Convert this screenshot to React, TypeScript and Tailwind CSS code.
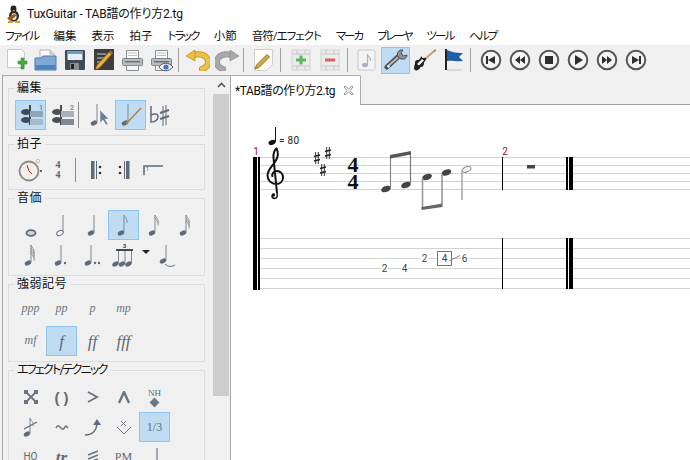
import type { ReactNode } from "react";

const SANS = "font-['Roboto','Noto_Sans_CJK_JP',sans-serif] [font-feature-settings:'palt']";
const GREY = "#5f6b78";

const MENUS = [
  { label: "ファイル", cls: "tracking-[-1.6px]" },
  { label: "編集", cls: "" },
  { label: "表示", cls: "" },
  { label: "拍子", cls: "" },
  { label: "トラック", cls: "tracking-[-1.7px]" },
  { label: "小節", cls: "" },
  { label: "音符/エフェクト", cls: "tracking-[-1px]" },
  { label: "マーカ", cls: "tracking-[-2px]" },
  { label: "プレーヤ", cls: "tracking-[-2.2px]" },
  { label: "ツール", cls: "tracking-[-1.7px]" },
  { label: "ヘルプ", cls: "tracking-[-1.7px]" },
];

function Svg({ w = 24, h = 24, children }: { w?: number; h?: number; children: ReactNode }) {
  return (
    <svg width={w} height={h} viewBox={`0 0 ${w} ${h}`} className="block">
      {children}
    </svg>
  );
}

// small quarter-ish note used by most palette icons
function Note({ x, y, stem = 22, fill = GREY, open = false }: { x: number; y: number; stem?: number; fill?: string; open?: boolean }) {
  return (
    <g>
      <ellipse cx={x} cy={y} rx={3.4} ry={2.3} transform={`rotate(-25 ${x} ${y})`} fill={open ? "none" : fill} stroke={fill} strokeWidth={open ? 1 : 0} />
      <line x1={x + 3} y1={y - 1} x2={x + 3} y2={y - stem} stroke="#7c8794" strokeWidth={1} />
    </g>
  );
}

function Flags({ x, y, n }: { x: number; y: number; n: number }) {
  return (
    <g fill="none" stroke="#7c8794" strokeWidth={0.9}>
      {Array.from({ length: n }, (_, i) => (
        <path key={i} d={`M${x} ${y + i * 2.6}c1 3 4 4 3 8`} />
      ))}
    </g>
  );
}

function Btn({ on, w = "w-[31px]", children }: { on?: boolean; w?: string; children: ReactNode }) {
  return (
    <div className={`${w} h-[30px] shrink-0 flex items-center justify-center ${on ? "bg-[#bfdcf3] border border-[#8ec4f4]" : ""}`}>
      {children}
    </div>
  );
}

function TBtn({ on, ml, children }: { on?: boolean; ml?: string; children: ReactNode }) {
  return (
    <div className={`w-[29px] h-[27px] shrink-0 flex items-center justify-center ${ml ?? ""} ${on ? "bg-[#bfdcf3] border border-[#8ec4f4]" : ""}`}>
      {children}
    </div>
  );
}

function TSep({ ml }: { ml: string }) {
  return <div className={`w-px h-[24px] bg-[#a0a0a0] shrink-0 ${ml}`} />;
}

function Play({ children }: { children: ReactNode }) {
  return (
    <svg width={22} height={22} viewBox="0 0 22 22" className="block">
      <circle cx={11} cy={11} r={9.3} fill="#f4f4f4" stroke="#555" strokeWidth={2} />
      <g fill="#2e2e2e">{children}</g>
    </svg>
  );
}

function Group({ title, h, pt, track = "tracking-[0.5px]", children }: { title: string; h: string; pt: string; track?: string; children: ReactNode }) {
  return (
    <fieldset className={`border border-[#dcdcdc] mx-[8px] pl-[6px] min-w-0 ${h} ${pt}`}>
      <legend className={`-ml-[1px] px-[3px] text-[12px] leading-[16px] text-[#111] ${track}`}>{title}</legend>
      {children}
    </fieldset>
  );
}

function Dyn({ children }: { children: string }) {
  return <span className="font-['Liberation_Serif',serif] italic text-[#6b7682] text-[12px] leading-none -mt-[2px]">{children}</span>;
}

function BigDyn({ children }: { children: string }) {
  return <span className="font-['Liberation_Serif',serif] italic text-[#5f6b78] text-[17px] leading-none">{children}</span>;
}

function TuxIcon() {
  return (
    <Svg w={15} h={18}>
      <ellipse cx={7.5} cy={4} rx={3} ry={3.4} fill="#222" />
      <ellipse cx={8} cy={11} rx={5} ry={5.5} fill="#2b2b2b" />
      <ellipse cx={8} cy={11.5} rx={2.6} ry={3.6} fill="#ece6d2" />
      <path d="M6 5h3l-1 1.5zM2 16h5v2H2zM9 16h5v2H9z" fill="#e0a020" />
      <path d="M1 13 8 9l3 1-7 6z" fill="#9a5a20" />
    </Svg>
  );
}

function NewIcon() {
  return (
    <Svg w={22} h={24}>
      <path d="M1.500 1.500h14l3 3v15h-17z" fill="#fdfdfd" stroke="#c8c8c8" />
      <path d="M13 12h3v-3h3v3h3v3h-3v5h-3v-5h-3z" transform="translate(-1 1)" fill="#46ad3c" stroke="#2b8228" strokeWidth={0.5} />
    </Svg>
  );
}

function OpenIcon() {
  return (
    <Svg w={24} h={24}>
      <path d="M6 2h10l4 4v8H6z" fill="#fafafa" stroke="#b0b0b0" />
      <path d="M16 2v4h4" fill="#dcdcdc" stroke="#b0b0b0" />
      <path d="M1 10h6l2-2h13v14H1z" fill="#7fa9d4" stroke="#4a7cb0" />
      <rect x={1.500} y={17} width={20} height={4.500} fill="#4c84bd" />
    </Svg>
  );
}

function SaveIcon() {
  return (
    <Svg w={22} h={22}>
      <rect x={1} y={1} width={20} height={20} rx={1} fill="#3f4a55" />
      <rect x={3.500} y={2} width={15} height={9} fill="#e8eef3" />
      <rect x={3.500} y={2} width={15} height={3} fill="#5f9fd0" />
      <rect x={6} y={14} width={9} height={7} fill="#8a8f95" />
      <rect x={7} y={15} width={3} height={5} fill="#222" />
    </Svg>
  );
}

function EditDocIcon() {
  return (
    <Svg w={22} h={24}>
      <rect x={1} y={1} width={20} height={21} fill="#3d3d3d" />
      <path d="M4 6h9M4 10h7M4 14h5" stroke="#c4d0db" />
      <path d="M2 22 4 17 16 4l2.500 2.500L6.500 20z" fill="#e8b02c" stroke="#6e4c10" strokeWidth={0.6} />
      <path d="M16 4l2.500 2.500L20 5l-2.500-2.500z" fill="#d05a4a" />
    </Svg>
  );
}

function Printer({ eye }: { eye?: boolean }) {
  return (
    <Svg w={23} h={23}>
      <path d="M5.500 1.500h12v8h-12z" fill="#fbfbfb" stroke="#8a8f95" />
      <path d="M7 4h9M7 6.500h9" stroke="#c0c0c0" />
      <rect x={1.500} y={9.500} width={20} height={7} rx={1} fill="#b7bcc1" stroke="#7d838a" />
      <rect x={4} y={12} width={15} height={1.400} fill="#6a6f75" />
      <path d="M5.500 16.500h12v5h-12z" fill="#f5f5f5" stroke="#8a8f95" />
      {eye && (
        <g>
          <path d="M9 18c3-5 10-5 14 0-4 5-11 5-14 0z" fill="#eef2f6" stroke="#555" />
          <circle cx={16} cy={18} r={2.600} fill="#3a78b8" />
        </g>
      )}
    </Svg>
  );
}

function UndoIcon({ redo }: { redo?: boolean }) {
  const c = redo ? "#a9a9a9" : "#edc040";
  const s = redo ? "#8c8c8c" : "#b78a1b";
  return (
    <svg width={25} height={21} viewBox="0 0 25 21" className="block" style={redo ? { transform: "scaleX(-1)" } : undefined}>
      <path d="M8 5c7-2 15 0 15 7 0 3-2 6-6 7" fill="none" stroke={s} strokeWidth={6} strokeLinecap="round" />
      <path d="M8 5c7-2 15 0 15 7 0 3-2 6-6 7" fill="none" stroke={c} strokeWidth={4.500} strokeLinecap="round" />
      <path d="M1 6 10 0v11z" fill={c} stroke={s} strokeWidth={0.7} />
    </svg>
  );
}

function PencilPage() {
  return (
    <Svg w={21} h={24}>
      <path d="M1.500 1.500h18v15l-6 6h-12z" fill="#fcfcfc" stroke="#cfcfcf" />
      <path d="M2 21 3.500 17 14 6.500 16.500 9 6 19.500z" fill="#d9a92c" stroke="#6a5320" strokeWidth={0.7} />
    </Svg>
  );
}

function TrackIcon({ add }: { add?: boolean }) {
  const c = add ? "#5fb65a" : "#d5625c";
  return (
    <Svg w={20} h={22}>
      <rect x={1} y={1} width={18} height={20} fill="#ececec" stroke="#d2d2d2" />
      <path d="M1 5h18M1 17h18M6 1v4M14 1v4M6 17v4M14 17v4" stroke="#c4c4c4" />
      <rect x={5} y={9.500} width={10} height={3} fill={c} />
      {add && <rect x={8.500} y={6.500} width={3} height={9} fill={c} />}
    </Svg>
  );
}

function NotePage() {
  return (
    <Svg w={19} h={22}>
      <rect x={1} y={1} width={17} height={20} rx={1} fill="#f4f4f4" stroke="#c8c8c8" />
      <ellipse cx={8} cy={16} rx={3} ry={2.200} fill="#a9b3c4" />
      <path d="M10.500 16V5c0 3 3.500 3 3 7" fill="none" stroke="#a9b3c4" strokeWidth={1.200} />
    </Svg>
  );
}

function Wrench() {
  return (
    <Svg w={24} h={24}>
      <path d="M3 19 16 7" stroke="#4a4a4a" strokeWidth={5} strokeLinecap="round" />
      <path d="M3.500 18.500 16 7.500" stroke="#b8bec4" strokeWidth={2} />
      <path d="M14 9c-2-4 1-8 5-7l-2 3 2 3 4-1c0 4-5 6-9 2z" fill="#8d949b" stroke="#3f3f3f" strokeWidth={0.8} />
      <circle cx={4.500} cy={18.500} r={1.200} fill="#fff" />
    </Svg>
  );
}

function Guitar() {
  return (
    <Svg w={24} h={24}>
      <path d="M10 13 21 3" stroke="#c2a06e" strokeWidth={1.800} />
      <path d="M20 3.500l2-2.500 1.500 1.500-2.500 2z" fill="#b58a55" />
      <path d="M8 8c1 1 1 2 2 2s3-1 3 1-2 2-2 4c0 2-1 4-3 4-1 0-1 2-3 3s-4 0-4-2 1-3 1-5c0-3 2-3 3-3s3-2 3-4z" fill="#1e1e1e" />
      <path d="M4 16l5-5 2 1.500-5 5z" fill="#eeeeee" />
    </Svg>
  );
}

function Flag() {
  return (
    <Svg w={22} h={24}>
      <rect x={2} y={1} width={2} height={21} fill="#222" />
      <path d="M4 2c5 2 8 3 16 3l-4 4 4 4c-7 1-11-1-16 0z" fill="#1f5fa8" />
      <path d="M4 21h16l-3 2H4z" fill="#d8d8d8" />
    </Svg>
  );
}

function Clef() {
  return (
    <g fill="none" stroke="#111">
      <path d="M277 193c.8 3.500 0 5.500-2.500 5.500-3 0-3.500-4-.5-4.300" strokeWidth={1.500} />
      <circle cx={273.500} cy={195} r={1.700} fill="#111" stroke="none" />
      <path d="M277 193 273.500 158c-.5-5 1.500-9 3-9.500 2 3.500 1.500 9-1.500 13.500-3.500 5-7.500 8-7.500 13.500 0 5 4 8.500 8.500 8.500s7-3 7-6.500-2.500-6.500-6-6.500-5.500 3-4.500 6" strokeWidth={2} />
    </g>
  );
}

function Sharp({ x, y }: { x: number; y: number }) {
  return (
    <g stroke="#222">
      <path d={`M${x - 1.300} ${y - 6}v12M${x + 1.300} ${y - 6}v12`} strokeWidth={0.9} />
      <path d={`M${x - 3} ${y - 1.500}l6-1.500M${x - 3} ${y + 3}l6-1.500`} strokeWidth={1.700} />
    </g>
  );
}

function Head({ x, y, fill = "#444" }: { x: number; y: number; fill?: string }) {
  return <ellipse cx={x} cy={y} rx={5} ry={3} transform={`rotate(-20 ${x} ${y})`} fill={fill} />;
}

function TabNum({ x, y, n }: { x: number; y: number; n: number }) {
  return (
    <g>
      <rect x={x - 3.500} y={y - 5} width={7} height={10} fill="#fff" />
      <text x={x} y={y + 3.500} textAnchor="middle" fontSize={10} fill="#444" fontFamily="Roboto, sans-serif">
        {n}
      </text>
    </g>
  );
}

function Score() {
  const staff = [157, 165, 173, 181, 189];
  const tab = [238, 248, 258, 268, 278, 288];
  return (
    <svg viewBox="231 105 459 355" width={459} height={355} className="block">
      {[...staff, ...tab].map((y) => (
        <line key={y} x1={256} y1={y + 0.500} x2={690} y2={y + 0.500} stroke="#d2d2d2" />
      ))}
      <rect x={253} y={157} width={4} height={133} fill="#000" />
      <rect x={258} y={157} width={2} height={133} fill="#000" />
      <text x={256} y={155} textAnchor="middle" fontSize={10} fill="#a01010" fontFamily="Roboto, sans-serif">1</text>
      <text x={505} y={155} textAnchor="middle" fontSize={10} fill="#a01010" fontFamily="Roboto, sans-serif">2</text>

      <ellipse cx={272} cy={142.500} rx={3.600} ry={2.400} transform="rotate(-20 272 142.500)" fill="#111" />
      <line x1={275.500} y1={127} x2={275.500} y2={142} stroke="#111" />
      <text x={279} y={143.500} fontSize={10} letterSpacing={0.3} fill="#222" fontFamily="Roboto, sans-serif">= 80</text>

      <Clef />
      <Sharp x={328} y={153} />
      <Sharp x={317} y={158} />
      <Sharp x={323} y={170} />
      <text x={353} y={172} textAnchor="middle" fontSize={22} fontWeight={700} fill="#111" fontFamily="Liberation Serif, serif">4</text>
      <text x={353} y={189} textAnchor="middle" fontSize={22} fontWeight={700} fill="#111" fontFamily="Liberation Serif, serif">4</text>

      <Head x={386} y={189} />
      <Head x={406} y={185} />
      <line x1={390.500} y1={187} x2={390.500} y2={157} stroke="#888" strokeWidth={1.200} />
      <line x1={410.500} y1={183} x2={410.500} y2={153} stroke="#777" strokeWidth={1.200} />
      <path d="M390 155 411 151v3.500L390 158.500z" fill="#555" />

      <Head x={427} y={177} />
      <Head x={446.500} y={172.500} />
      <line x1={422.500} y1={178} x2={422.500} y2={209} stroke="#999" strokeWidth={1.600} />
      <line x1={442} y1={174} x2={442} y2={204} stroke="#999" strokeWidth={1.600} />
      <path d="M421.500 207 442.500 203.500v3.500L421.500 210z" fill="#666" />

      <ellipse cx={466.700} cy={169.300} rx={4.400} ry={2.500} transform="rotate(-25 466.700 169.300)" fill="#fff" stroke="#888" />
      <line x1={462} y1={170} x2={462} y2={200} stroke="#aaa" strokeWidth={1.600} />

      <rect x={527} y={165} width={8} height={3.500} fill="#444" />

      <rect x={502} y={157} width={1} height={33} fill="#000" />
      <rect x={502} y={238} width={1} height={51} fill="#000" />
      <rect x={566} y={157} width={2} height={33} fill="#000" />
      <rect x={569} y={157} width={4} height={33} fill="#000" />
      <rect x={566} y={238} width={2} height={51} fill="#000" />
      <rect x={569} y={238} width={4} height={51} fill="#000" />

      <TabNum x={384.500} y={268.500} n={2} />
      <TabNum x={404.500} y={268.500} n={4} />
      <TabNum x={424.500} y={258.500} n={2} />
      <rect x={437.500} y={251.500} width={14} height={14} fill="#fff" stroke="#777" />
      <TabNum x={444.500} y={258.500} n={4} />
      <TabNum x={464.500} y={258.500} n={6} />
      <line x1={449} y1={261} x2={460} y2={255.500} stroke="#888" />
    </svg>
  );
}

export default function App() {
  return (
    <div className={`w-[690px] h-[460px] overflow-hidden bg-white flex flex-col text-[#111] ${SANS}`}>
      <div className="h-[28px] flex items-center pl-[6px] gap-[6px] shrink-0">
        <TuxIcon />
        <span className="text-[12px] leading-none tracking-[-0.2px]">TuxGuitar - TAB譜の作り方2.tg</span>
      </div>

      <div className="h-[17px] flex items-center pl-[5px] gap-[15px] shrink-0">
        {MENUS.map((m) => (
          <span key={m.label} className={`text-[11.5px] leading-none ${m.cls}`}>
            {m.label}
          </span>
        ))}
      </div>

      <div className="h-[30px] bg-[#f0f0f0] flex items-center pl-[2px] shrink-0">
        <TBtn><NewIcon /></TBtn>
        <TBtn><OpenIcon /></TBtn>
        <TBtn><SaveIcon /></TBtn>
        <TBtn><EditDocIcon /></TBtn>
        <TBtn><Printer /></TBtn>
        <TBtn><Printer eye /></TBtn>
        <TSep ml="ml-[2px]" />
        <TBtn ml="ml-[4px]"><UndoIcon /></TBtn>
        <TBtn ml="ml-[1px]"><UndoIcon redo /></TBtn>
        <TSep ml="ml-[1px]" />
        <TBtn ml="ml-[5px]"><PencilPage /></TBtn>
        <TSep ml="ml-[2px]" />
        <TBtn ml="ml-[5px]"><TrackIcon add /></TBtn>
        <TBtn><TrackIcon /></TBtn>
        <TSep ml="ml-[3px]" />
        <TBtn ml="ml-[4px]"><NotePage /></TBtn>
        <TBtn on><Wrench /></TBtn>
        <TBtn><Guitar /></TBtn>
        <TBtn><Flag /></TBtn>
        <TSep ml="ml-[2px]" />
        <TBtn ml="ml-[5px]"><Play><path d="M6 7h2v8H6zM15 7v8l-7-4z" /></Play></TBtn>
        <TBtn><Play><path d="M11 7v8l-5-4zM16 7v8l-5-4z" /></Play></TBtn>
        <TBtn><Play><rect x={7} y={7} width={8} height={8} /></Play></TBtn>
        <TBtn><Play><path d="M8 6v10l8-5z" /></Play></TBtn>
        <TBtn><Play><path d="M6 7v8l5-4zM11 7v8l5-4z" /></Play></TBtn>
        <TBtn><Play><path d="M7 7v8l7-4zM14 7h2v8h-2z" /></Play></TBtn>
      </div>

      <div className="flex-1 flex min-h-0">
        <div className="w-[230px] shrink-0 bg-[#f0f0f0] flex pl-[2px]">
          <div className="flex-1 border-l border-t border-[#a8a8b0] flex min-w-0">
            <div className="flex-1 min-w-0 overflow-hidden pt-[4px] -ml-[3px] text-[12px]">
              <Group title="編集" h="h-[56px]" pt="pt-[4px]">
                <div className="flex items-center">
                  <Btn on w="w-[31px]">
                    <Svg w={26} h={24}>
                      <path d="M12 2v20" stroke="#3f4a55" strokeWidth={2} />
                      <ellipse cx={8} cy={9} rx={5} ry={3} fill="#3f4a55" />
                      <ellipse cx={8} cy={17} rx={5} ry={3} fill="#3f4a55" />
                      <rect x={12} y={8} width={13} height={6} fill="#8ea4ba" />
                      <rect x={12} y={16} width={13} height={6} fill="#a7bacb" />
                      <text x={21} y={7} fontSize={7} fontWeight={700} fill="#7b8da0">1</text>
                    </Svg>
                  </Btn>
                  <Btn w="w-[31px]">
                    <Svg w={26} h={24}>
                      <path d="M12 2v20" stroke="#4a4f55" strokeWidth={2} />
                      <ellipse cx={8} cy={9} rx={5} ry={3} fill="#4a4f55" />
                      <ellipse cx={8} cy={17} rx={5} ry={3} fill="#4a4f55" />
                      <rect x={12} y={8} width={13} height={6} fill="#a9b1b9" />
                      <rect x={12} y={16} width={13} height={6} fill="#7f8992" />
                      <text x={21} y={7} fontSize={7} fontWeight={700} fill="#7b8da0">2</text>
                    </Svg>
                  </Btn>
                  <div className="w-px h-[26px] bg-[#8a8a8a] ml-[1px] mr-[8px]" />
                  <Btn w="w-[28px]">
                    <Svg w={24} h={24}>
                      <Note x={5} y={20} stem={19} />
                      <path d="M11 7v13l3-3 3 5 2-1-3-5h4z" fill="#6f7e8e" stroke="#fff" strokeWidth={0.5} />
                    </Svg>
                  </Btn>
                  <Btn on w="w-[31px]">
                    <Svg w={24} h={24}>
                      <Note x={6} y={20} stem={19} />
                      <path d="M7 21 22 5" stroke="#b5823a" strokeWidth={1.400} />
                    </Svg>
                  </Btn>
                  <Btn w="w-[28px]">
                    <Svg w={24} h={24}>
                      <path d="M3 3v16c4 0 7-2 7-6 0-2-3-3-7-1" fill="none" stroke={GREY} strokeWidth={1.500} />
                      <path d="M15 3v20M18 2v20" stroke={GREY} />
                      <path d="M12 10l9-3M12 16l9-3" stroke={GREY} strokeWidth={2} />
                    </Svg>
                  </Btn>
                </div>
              </Group>

              <Group title="拍子" h="h-[54px]" pt="pt-[3px]">
                <div className="flex items-center">
                  <Btn w="w-[30px]">
                    <Svg w={24} h={24}>
                      <circle cx={11} cy={13} r={9.500} fill="#f5efe8" stroke="#8b8b8b" strokeWidth={1.800} />
                      <circle cx={20} cy={3} r={1.800} fill="none" stroke="#b8b8b8" />
                      <path d="M11 13 9 7M11 13l3 3" stroke="#b02a2a" />
                      <path d="M22 13h2" stroke="#333" strokeWidth={1.400} />
                    </Svg>
                  </Btn>
                  <Btn w="w-[26px]">
                    <span className="font-['Liberation_Serif',serif] font-bold text-[10px] leading-[10px] text-[#5a6572] flex flex-col items-center">
                      <span>4</span>
                      <span>4</span>
                    </span>
                  </Btn>
                  <div className="w-px h-[24px] bg-[#8a8a8a] ml-[4px] mr-[11px]" />
                  <Btn w="w-[20px]">
                    <Svg w={14} h={20}>
                      <rect x={1} y={1} width={3.500} height={18} fill={GREY} />
                      <rect x={6} y={1} width={1} height={18} fill={GREY} />
                      <circle cx={10} cy={7} r={1.300} fill="#333" />
                      <circle cx={10} cy={13} r={1.300} fill="#333" />
                    </Svg>
                  </Btn>
                  <Btn w="w-[34px]">
                    <Svg w={14} h={20}>
                      <rect x={9} y={1} width={3.500} height={18} fill={GREY} />
                      <rect x={7} y={1} width={1} height={18} fill={GREY} />
                      <circle cx={3} cy={7} r={1.300} fill="#333" />
                      <circle cx={3} cy={13} r={1.300} fill="#333" />
                    </Svg>
                  </Btn>
                  <Btn w="w-[24px]">
                    <Svg w={22} h={12}>
                      <path d="M2 11V2h19" fill="none" stroke={GREY} strokeWidth={1.600} />
                      <text x={4} y={7} fontSize={5} fill="#555">1</text>
                    </Svg>
                  </Btn>
                </div>
              </Group>

              <Group title="音価" h="h-[86px]" pt="pt-[4px]">
                <div className="flex">
                  <Btn><Svg w={14} h={24}><ellipse cx={7} cy={20} rx={4.500} ry={2.800} fill="#cfd4da" stroke={GREY} strokeWidth={1.800} /></Svg></Btn>
                  <Btn><Svg w={14} h={24}><Note x={5} y={20} stem={18} open /></Svg></Btn>
                  <Btn><Svg w={14} h={24}><Note x={5} y={20} stem={18} /></Svg></Btn>
                  <Btn on><Svg w={16} h={24}><Note x={5} y={20} stem={18} /><Flags x={8} y={2} n={1} /></Svg></Btn>
                  <Btn><Svg w={16} h={24}><Note x={5} y={20} stem={18} /><Flags x={8} y={2} n={2} /></Svg></Btn>
                  <Btn><Svg w={16} h={24}><Note x={5} y={20} stem={18} /><Flags x={8} y={2} n={3} /></Svg></Btn>
                </div>
                <div className="flex">
                  <Btn><Svg w={16} h={24}><Note x={5} y={20} stem={18} /><Flags x={8} y={2} n={4} /></Svg></Btn>
                  <Btn><Svg w={18} h={24}><Note x={5} y={20} stem={18} /><circle cx={12} cy={20} r={1.200} fill={GREY} /></Svg></Btn>
                  <Btn><Svg w={20} h={24}><Note x={5} y={20} stem={18} /><circle cx={12} cy={20} r={1.200} fill={GREY} /><circle cx={16} cy={20} r={1.200} fill={GREY} /></Svg></Btn>
                  <Btn>
                    <Svg w={24} h={24}>
                      <Note x={3.500} y={21} stem={14} />
                      <Note x={10} y={21} stem={14} />
                      <Note x={16.500} y={21} stem={14} />
                      <rect x={4} y={6} width={17} height={2} fill="#3f4a55" />
                      <text x={12.500} y={5} textAnchor="middle" fontSize={6} fontWeight={700} fill="#333">3</text>
                    </Svg>
                  </Btn>
                  <div className="w-[14px] h-[30px] flex items-center justify-center -mt-[3px]">
                    <div className="w-0 h-0 border-x-[4px] border-x-transparent border-t-[4px] border-t-[#222]" />
                  </div>
                  <Btn w="w-[29px]">
                    <Svg w={18} h={24}>
                      <Note x={4} y={18} stem={16} />
                      <path d="M6 21c3 3 7 3 10 1" fill="none" stroke={GREY} />
                    </Svg>
                  </Btn>
                </div>
              </Group>

              <Group title="強弱記号" h="h-[86px]" pt="pt-[2px]">
                <div className="flex">
                  {["ppp", "pp", "p", "mp"].map((d) => (
                    <Btn key={d}><Dyn>{d}</Dyn></Btn>
                  ))}
                </div>
                <div className="flex mt-[2px]">
                  <Btn><Dyn>mf</Dyn></Btn>
                  <Btn on><BigDyn>f</BigDyn></Btn>
                  <Btn><BigDyn>ff</BigDyn></Btn>
                  <Btn><BigDyn>fff</BigDyn></Btn>
                </div>
              </Group>

              <Group title="エフェクト/テクニック" h="h-[110px]" pt="pt-[4px]" track="tracking-[-1.8px]">
                <div className="flex">
                  <Btn>
                    <Svg w={14} h={14}>
                      <path d="M3 3l8 8M11 3l-8 8" stroke="#6b7682" strokeWidth={1.800} />
                      <path d="M0 0h4v4H0zM10 0h4v4h-4zM0 10h4v4H0zM10 10h4v4h-4z" fill="#6b7682" />
                    </Svg>
                  </Btn>
                  <Btn><span className="text-[#5f6b78] text-[15px] font-bold leading-none font-['Liberation_Sans',sans-serif]">( )</span></Btn>
                  <Btn><Svg w={12} h={12}><path d="M1 1l9 5-9 5" fill="none" stroke="#6b7682" strokeWidth={2} /></Svg></Btn>
                  <Btn><Svg w={12} h={13}><path d="M1 12 6 1l5 11" fill="none" stroke="#6b7682" strokeWidth={2.400} /></Svg></Btn>
                  <Btn>
                    <div className="flex flex-col items-center">
                      <span className="font-['Liberation_Serif',serif] text-[9px] leading-[9px] text-[#5f6b78]">NH</span>
                      <div className="w-[7px] h-[7px] rotate-45 bg-[#6b7682] mt-[1px]" />
                    </div>
                  </Btn>
                </div>
                <div className="flex">
                  <Btn>
                    <Svg w={16} h={22}>
                      <Note x={4} y={18} stem={16} />
                      <path d="M1 13 14 6" stroke={GREY} strokeWidth={1.200} />
                      <Flags x={7} y={2} n={1} />
                    </Svg>
                  </Btn>
                  <Btn><Svg w={14} h={8}><path d="M1 5c2-4 3-2 5 0s3 1 4-1 2 0 3 1" fill="none" stroke="#6b7682" strokeWidth={1.600} /></Svg></Btn>
                  <Btn>
                    <Svg w={18} h={20}>
                      <path d="M1 18c7 0 11-3 12-11" fill="none" stroke={GREY} strokeWidth={1.400} />
                      <path d="M9 8l4-6 4 6z" fill={GREY} />
                    </Svg>
                  </Btn>
                  <Btn>
                    <Svg w={16} h={18}>
                      <path d="M1 9l7 7 7-7" fill="none" stroke="#6b7682" />
                      <path d="M5 3l5 5M10 3 5 8" stroke="#6b7682" />
                    </Svg>
                  </Btn>
                  <Btn on><span className="font-['Liberation_Serif',serif] text-[#5f6b78] text-[12px]">1/3</span></Btn>
                </div>
                <div className="flex">
                  <Btn><span className="text-[#5f6b78] text-[10px] leading-none">HO</span></Btn>
                  <Btn><span className="font-['Liberation_Serif',serif] italic font-bold text-[#5f6b78] text-[17px] leading-none">tr</span></Btn>
                  <Btn><Svg w={12} h={14}><path d="M1 5l10-4M1 9l10-4M1 13l10-4" stroke="#6b7682" strokeWidth={1.800} /></Svg></Btn>
                  <Btn><span className="font-['Liberation_Serif',serif] text-[#5f6b78] text-[12px] leading-none">PM</span></Btn>
                  <Btn><Svg w={10} h={20}><path d="M7 1v14H2" fill="none" stroke="#6b7682" strokeWidth={1.200} /></Svg></Btn>
                </div>
              </Group>
            </div>

            <div className="w-[16px] shrink-0 mr-px flex flex-col">
              <div className="h-[18px] flex items-center justify-center">
                <svg width={9} height={6} viewBox="0 0 9 6">
                  <path d="M1 5l3.500-3.500L8 5" fill="none" stroke="#555" strokeWidth={1.600} />
                </svg>
              </div>
              <div className="h-[302px] bg-[#cdcdcd]" />
            </div>
          </div>
        </div>

        <div className="flex-1 min-w-0 border-l border-[#a8a8b0] flex flex-col">
          <div className="h-[30px] shrink-0 flex bg-[#f0f0f0] border-b border-[#a0a0a0]">
            <div className="w-[130px] h-[30px] bg-white border-t border-r border-[#a8a8b0] rounded-tr-[2px] flex items-center pl-[4px] justify-between pr-[6px]">
              <span className="text-[12px] leading-none whitespace-nowrap tracking-[-0.4px]">*TAB譜の作り方2.tg</span>
              <svg width={11} height={11} viewBox="0 0 11 11">
                <path d="M2 1l3.500 3L9 1l1 1-3 3.500 3 3.500-1 1-3.500-3L2 10 1 9l3-3.500L1 2z" fill="none" stroke="#777" strokeWidth={0.8} />
              </svg>
            </div>
          </div>
          <Score />
        </div>
      </div>
    </div>
  );
}
